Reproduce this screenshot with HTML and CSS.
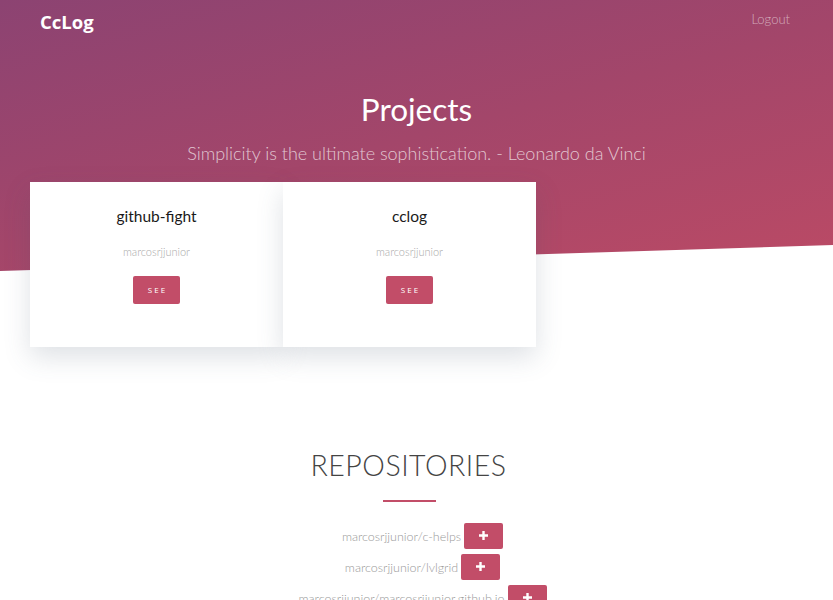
FILE: index.html
```html
<!DOCTYPE html>
<html>
<head>
<meta charset="utf-8">
<link rel="stylesheet" href="styles.css">
</head>
<body>
<header class="hero">
  <nav class="nav">
    <a class="brand">CcLog</a>
    <a class="logout">Logout</a>
  </nav>
  <h1 class="hero-title">Projects</h1>
  <p class="hero-quote">Simplicity is the ultimate sophistication. - Leonardo da Vinci</p>
</header>
<section class="cards">
  <div class="card">
    <h3 class="card-title">github-fight</h3>
    <p class="card-owner">marcosrjjunior</p>
    <a class="btn-see">SEE</a>
  </div>
  <div class="card">
    <h3 class="card-title">cclog</h3>
    <p class="card-owner">marcosrjjunior</p>
    <a class="btn-see">SEE</a>
  </div>
</section>
<section class="repos">
  <h2 class="repos-title">REPOSITORIES</h2>
  <div class="repos-line"></div>
  <ul class="repo-list">
    <li class="repo"><span class="repo-name">marcosrjjunior/c-helps</span><a class="btn-plus"><svg class="plus-icon" viewBox="0 0 9 9" width="9" height="9"><path d="M3.3 0h2.4v3.3H9v2.4H5.7V9H3.3V5.7H0V3.3h3.3z" fill="#fff"/></svg></a></li>
    <li class="repo"><span class="repo-name">marcosrjjunior/lvlgrid</span><a class="btn-plus"><svg class="plus-icon" viewBox="0 0 9 9" width="9" height="9"><path d="M3.3 0h2.4v3.3H9v2.4H5.7V9H3.3V5.7H0V3.3h3.3z" fill="#fff"/></svg></a></li>
    <li class="repo"><span class="repo-name">marcosrjjunior/marcosrjjunior.github.io</span><a class="btn-plus"><svg class="plus-icon" viewBox="0 0 9 9" width="9" height="9"><path d="M3.3 0h2.4v3.3H9v2.4H5.7V9H3.3V5.7H0V3.3h3.3z" fill="#fff"/></svg></a></li>
  </ul>
</section>
</body>
</html>
```
FILE: styles.css
```css
* { box-sizing: border-box; }
body {
  margin: 0;
  font-family: "Source Sans Pro", Lato, "Liberation Sans", sans-serif;
  background: #fff;
  overflow: hidden;
}
.hero {
  height: 271px;
  background: linear-gradient(165deg, #8c4372 0%, #a3466a 50%, #bb4a65 100%);
  clip-path: polygon(0 0, 100% 0, 100% 245px, 0 271px);
  color: #fff;
}
.nav {
  display: flex;
  justify-content: space-between;
  align-items: flex-start;
  padding: 9px 43px 0 40px;
  height: 72px;
}
.brand {
  font-family: "Open Sans", sans-serif;
  font-weight: 700;
  font-size: 18.5px;
  color: #fff;
}
.logout {
  font-weight: 300;
  font-size: 13px;
  color: rgba(255,255,255,0.55);
  padding-top: 2px;
}
.hero-title {
  margin: 17px 0 0;
  text-align: center;
  font-weight: 400;
  font-size: 31.5px;
  line-height: 40px;
}
.hero-quote {
  margin: 12px 0 0;
  text-align: center;
  font-weight: 300;
  font-size: 18px;
  line-height: 24px;
  color: rgba(255,255,255,0.7);
}
.cards {
  position: relative;
  z-index: 1;
  display: flex;
  margin: -89px 0 0 30px;
}
.card {
  width: 253px;
  height: 165px;
  background: #fff;
  text-align: center;
  box-shadow: 0 10px 25px rgba(70, 90, 110, 0.18);
  padding-top: 24px;
}
.card-title {
  margin: 0;
  font-weight: 400;
  font-size: 15.5px;
  line-height: 20px;
  color: #1a1a1a;
}
.card-owner {
  margin: 19px 0 0;
  font-weight: 300;
  font-size: 11px;
  line-height: 14px;
  color: #aaa;
}
.btn-see {
  display: inline-block;
  margin-top: 17px;
  width: 47px;
  height: 28px;
  line-height: 28px;
  background: #c24d68;
  color: #fff;
  border-radius: 2px;
  font-family: "Open Sans", sans-serif;
  font-size: 8px;
  letter-spacing: 2px;
  padding-left: 2px;
}
.repos {
  text-align: center;
  padding-top: 99px;
}
.repos-title {
  margin: 0;
  font-weight: 300;
  font-size: 28.5px;
  line-height: 38px;
  color: #444;
  letter-spacing: 0.5px;
  transform: translateX(-8px);
}
.repos-line {
  width: 53px;
  height: 2px;
  background: #c24d68;
  margin: 16px auto 0;
  transform: translateX(-7px);
}
.repo-list {
  list-style: none;
  margin: 21px 0 0;
  padding: 0 0 0 12px;
}
.repo {
  display: flex;
  justify-content: center;
  align-items: center;
  height: 26px;
  margin-bottom: 5px;
}
.repo-name {
  font-weight: 300;
  font-size: 12.5px;
  color: #999;
  margin-right: 3px;
}
.btn-plus {
  display: flex;
  align-items: center;
  justify-content: center;
  width: 39px;
  height: 26px;
  background: #c24d68;
  border-radius: 2px;
  padding-bottom: 2px;
}
.plus-icon { display: block; }
```
